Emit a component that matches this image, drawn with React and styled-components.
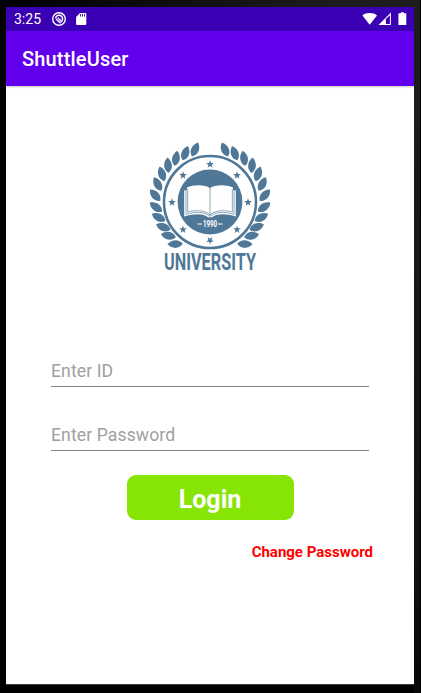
import React from "react";
import styled, { createGlobalStyle } from "styled-components";

const GlobalStyle = createGlobalStyle`
  * { box-sizing: border-box; }
  body { margin: 0; background: #000; font-family: Roboto, "Noto Sans", sans-serif; }
`;

const Device = styled.div`
  width: 421px;
  height: 693px;
  padding: 7px 7px 9px 6px;
  background:
    linear-gradient(#000, #000) right / 1px 100% no-repeat,
    linear-gradient(180deg, #1e1e1e 0, #1a1a1a 130px, #111 560px, #080808 693px) right / 7px 100% no-repeat,
    linear-gradient(90deg, #000 0, #0a0a0a 120px, #1c1c1c 330px, #1e1e1e 100%) top / 100% 7px no-repeat,
    #000;
`;

const Screen = styled.div`
  height: 677px;
  display: flex;
  flex-direction: column;
  background: #fff;
  box-shadow: 0 1px 0 #3b3b3f;
`;

const StatusBar = styled.div`
  height: 24px;
  flex: none;
  display: flex;
  align-items: center;
  padding: 0 7px 0 8px;
  background: #3a00b3;
  color: #fff;
`;

const Clock = styled.span`
  width: 37px;
  font-size: 14px;
  line-height: 24px;
`;

const StatusIcons = styled.div`
  display: flex;
  align-items: center;
  gap: ${(p) => p.$gap}px;
  margin-left: ${(p) => (p.$end ? "auto" : "0")};
  svg { display: block; }
`;

const AppBar = styled.header`
  height: 55px;
  flex: none;
  padding-left: 16px;
  background: #6200ee;
  color: #fff;
  font-size: 20px;
  font-weight: 500;
  letter-spacing: 0.17px;
  line-height: 56px;
  box-shadow: 0 1px 2px rgba(0, 0, 0, 0.22);
`;

const Content = styled.main`
  display: flex;
  flex-direction: column;
  padding: 52px 45px 0;
`;

const Crest = styled.svg`
  align-self: center;
  display: block;
  width: 140px;
  height: 140px;
  overflow: visible;
`;

const Field = styled.input`
  height: 35px;
  margin-top: ${(p) => p.$gap}px;
  padding: 4px 0 0;
  border: 0;
  border-bottom: 1px solid #808080;
  border-radius: 0;
  outline: 0;
  background: transparent;
  font: 400 17.6px Roboto, sans-serif;
  letter-spacing: 0.1px;
  &::placeholder { color: #a0a0a0; opacity: 1; }
`;

const LoginButton = styled.button`
  align-self: center;
  width: 167px;
  height: 45px;
  margin-top: 24px;
  padding: 3px 0 0;
  border: 0;
  border-radius: 9px;
  background: #86e504;
  color: #fff;
  font: 700 25px Roboto, sans-serif;
`;

const ChangeLink = styled.a`
  align-self: flex-end;
  margin: 22px -4px 0 0;
  color: #ff0000;
  font-size: 15px;
  font-weight: 700;
  line-height: 20px;
`;

const INK = "#4f7898";

const LEAVES = [
  [195, 149.7, 24], [185.3, 153.3, 20], [176, 158.4, 10], [168, 165.4, -4],
  [162, 174, -18], [157.7, 184.2, -28], [155.2, 195.4, -42],
  [156, 207, -54], [158.7, 217.5, -62], [163.4, 227.2, -70],
  [168.6, 235.8, -78], [175.2, 244.1, -92],
];

const STARS = [
  [210, 164.3, 0], [183, 175.3, 0], [237, 175.3, 0], [172, 202.3, 0],
  [248, 202.3, 0], [183, 229.5, 0], [237, 229.5, 0], [210, 240.5, 180],
];

const STAR = "M0-4 1-1.3 3.9-1.2 1.6.6 2.4 3.4 0 1.8-2.4 3.4-1.6.6-3.9-1.2-1-1.3Z";

function Wreath() {
  return LEAVES.map(([x, y, a]) => (
    <path key={y} transform={`translate(${x} ${y}) rotate(${a})`} d="M0-7.8C5.3-3 5 4.2 0 7.5C-5 4.2-5.3-3 0-7.8Z" />
  ));
}

function UniversityCrest() {
  return (
    <Crest viewBox="140 138 140 140" fill={INK}>
      <Wreath />
      <g transform="translate(420 0) scale(-1 1)"><Wreath /></g>
      <circle cx="210" cy="202" r="46" fill="#fff" stroke={INK} strokeWidth="2.6" />
      <circle cx="210" cy="202" r="32.4" />
      {STARS.map(([x, y, a]) => (
        <path key={`${x}-${y}`} transform={`translate(${x} ${y}) rotate(${a})`} d={STAR} />
      ))}
      <path fill="#fff" d="M184.2 190.5 187 190V187.6C194 184.5 205 184.5 210 188.2C215 184.5 226 184.5 233 187.6V190L235.8 190.5V216.6C226 213.5 216 213.5 212 217.3H208C204 213.5 194 213.5 184.2 216.6Z" />
      <path fill="none" stroke={INK} strokeWidth=".65" d="M210 188V215.5M187.7 189V212C196 209.6 206 210.5 210 215C214 210.5 224 209.6 232.3 212V189M186 190V214.3C196 211.2 205 212 210 216.4C215 212 224 211.2 234 214.3V190" />
      <path stroke="#fff" strokeWidth="1" d="M197.5 224H202M218 224H222.5" />
      <text x="210" y="227" textAnchor="middle" textLength="14" lengthAdjust="spacingAndGlyphs" fill="#fff" fontFamily="Roboto" fontWeight="700" fontSize="8.5">1990</text>
      <text x="164" y="269.5" textLength="92" lengthAdjust="spacingAndGlyphs" fontFamily="Roboto" fontWeight="700" fontSize="24.8">UNIVERSITY</text>
    </Crest>
  );
}

export default function App() {
  return (
    <>
      <GlobalStyle />
      <Device>
        <Screen>
          <StatusBar>
            <Clock>3:25</Clock>
            <StatusIcons $gap={9}>
              <svg width="16" height="16" viewBox="0 0 16 16" fill="none" stroke="#fff">
                <circle cx="8" cy="8" r="6.3" strokeWidth="1.4" />
                <path d="M4.6 7.4A3.5 3.5 0 1 1 10.8 9.9" strokeWidth="1.5" />
                <path d="M5 8 9.6 12.2M6.8 6.8 11 11" strokeWidth="1.4" />
              </svg>
              <svg width="11" height="14" viewBox="0 0 11 14">
                <path fill="#fff" d="M4 1H9.2Q10.3 1 10.3 2.1V11.9Q10.3 13 9.2 13H1.1Q.1 13 .1 12V4.9Z" />
                <path stroke="#3a00b3" strokeWidth=".9" d="M4.5 2V4.6M6.5 2V4.6M8.5 2V4.6" />
              </svg>
            </StatusIcons>
            <StatusIcons $end $gap={1}>
              <svg width="16" height="14" viewBox="0 0 16 14">
                <path fill="#fff" d="M1.4 3.4C5 .2 12.4.2 16 3.4L8.7 12.8Z" />
              </svg>
              <svg width="13" height="14" viewBox="0 0 13 14">
                <path fill="#fff" fillRule="evenodd" d="M12.9 .6V13H.5ZM7.9 7V12H11.9V3.2Z" />
              </svg>
              <svg width="15" height="14" viewBox="0 0 15 14">
                <path fill="#fff" d="M8.9.3H11.8V1.3H13.8Q14.3 1.3 14.3 1.8V12.5Q14.3 13 13.8 13H6.9Q6.4 13 6.4 12.5V1.8Q6.4 1.3 6.9 1.3H8.9Z" />
              </svg>
            </StatusIcons>
          </StatusBar>
          <AppBar>ShuttleUser</AppBar>
          <Content>
            <UniversityCrest />
            <Field $gap={74} placeholder="Enter ID" aria-label="ID" />
            <Field $gap={29} type="password" placeholder="Enter Password" aria-label="Password" />
            <LoginButton>Login</LoginButton>
            <ChangeLink>Change Password</ChangeLink>
          </Content>
        </Screen>
      </Device>
    </>
  );
}
